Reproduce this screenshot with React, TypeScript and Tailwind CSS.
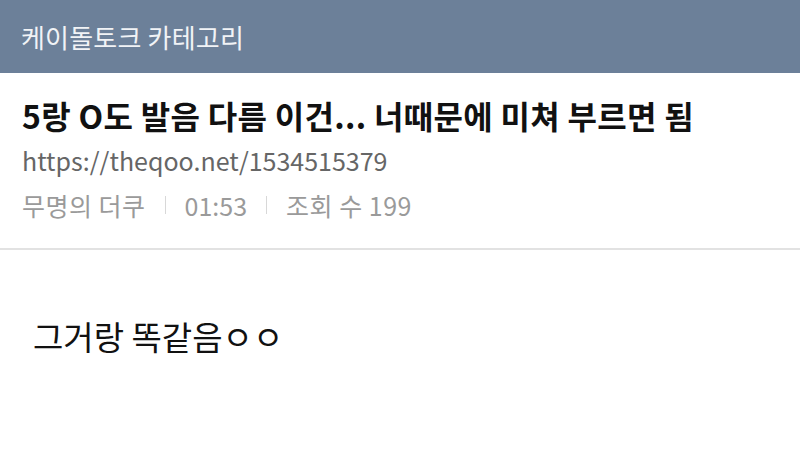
import React from 'react';

const font = { fontFamily: '"Noto Sans CJK KR", "Noto Sans", sans-serif' };

export default function App() {
  return (
    <div className="w-[800px] h-[460px] bg-white overflow-hidden" style={font}>
      <div className="h-[73px] bg-[#6c8099] flex items-center px-[21px]">
        <span className="text-[26px] text-[#f1f3f6] tracking-[0.2px]">케이돌토크 카테고리</span>
      </div>
      <div className="px-[22px] pt-[22px] pb-[28px] border-b-2 border-[#e2e2e2]">
        <h1 className="text-[32px] font-bold text-[#111] leading-[40px] tracking-[0.3px] whitespace-nowrap">
          5랑 O도 발음 다름 이건... 너때문에 미쳐 부르면 됨
        </h1>
        <div className="mt-[10px] text-[25px] text-[#666] leading-[30px]">https://theqoo.net/1534515379</div>
        <div className="mt-[15px] flex items-center text-[25px] text-[#9a9a9a] leading-[30px]">
          <span className="tracking-[0.5px]">무명의 더쿠</span>
          <span className="mx-[19px] w-px h-[18px] bg-[#d8d8d8]" />
          <span>01:53</span>
          <span className="mx-[19px] w-px h-[18px] bg-[#d8d8d8]" />
          <span className="tracking-[0.5px]">조회 수 199</span>
        </div>
      </div>
      <div className="px-[33px] pt-[64px]">
        <p className="text-[33px] text-[#111] leading-[44px]">그거랑 똑같음ㅇㅇ</p>
      </div>
    </div>
  );
}
